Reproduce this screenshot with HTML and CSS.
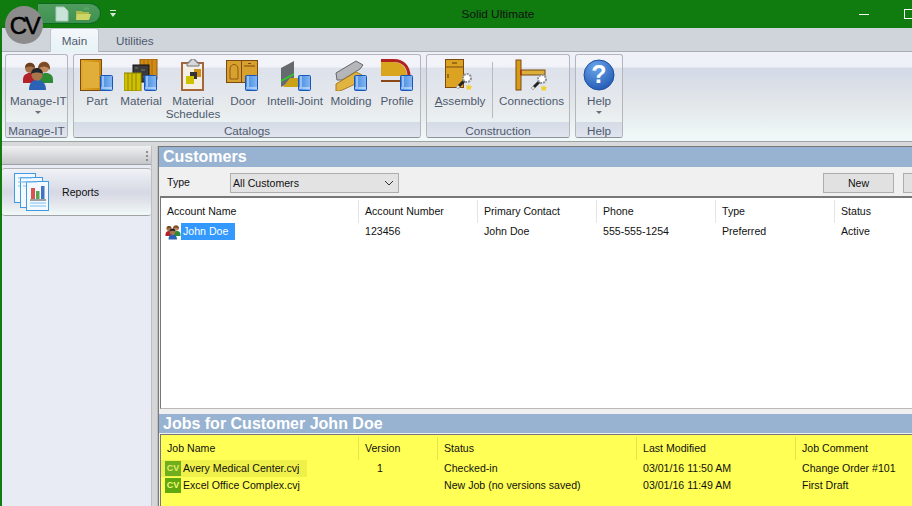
FILE: index.html
```html
<!DOCTYPE html>
<html lang="en">
<head>
<meta charset="utf-8">
<title>Solid Ultimate</title>
<link rel="stylesheet" href="styles.css">
</head>
<body>
<svg class="defs" width="0" height="0" aria-hidden="true">
  <defs>
    <linearGradient id="gold" x1="0" y1="0" x2="1" y2="0"><stop offset="0" stop-color="#e3aa2a"/><stop offset="1" stop-color="#c98a10"/></linearGradient>
    <linearGradient id="bk" x1="0" y1="0" x2="1" y2="0"><stop offset="0" stop-color="#3f87e0"/><stop offset="1" stop-color="#86b8f2"/></linearGradient>
    <radialGradient id="hlp" cx=".4" cy=".25" r=".85"><stop offset="0" stop-color="#6aa5ec"/><stop offset="1" stop-color="#1c54ae"/></radialGradient>
    <symbol id="book" viewBox="0 0 13 16">
      <rect x=".5" y=".5" width="12" height="15" rx="1" fill="url(#bk)" stroke="#1a56b8"/>
      <path d="M3 1v11M1 13h11" stroke="#e6f0ff" fill="none"/>
    </symbol>
    <symbol id="wand" viewBox="0 0 18 18">
      <path d="M2 16L10 8" stroke="#222" stroke-width="3"/>
      <path d="M2 16l2-2" stroke="#ddd" stroke-width="3"/>
      <circle cx="12" cy="6" r="4" fill="#fff" stroke="#8a8f98" stroke-width="2" stroke-dasharray="2 1"/>
      <path d="M11 13l2 1 1-2 1 2 2 0-1 2 0 2-2-1-2 1z" fill="#f0cf30"/>
    </symbol>
    <symbol id="people" viewBox="0 0 32 32">
      <path d="M1 21c0-5 3-7 7-7s7 2 7 7v3H1z" fill="#b3222a"/>
      <circle cx="8" cy="9" r="5" fill="#a56f45"/><path d="M3 9c0-7 10-7 10 0-3-2-7-2-10 0z" fill="#6b3f20"/>
      <path d="M17 21c0-5 3-7 7-7s7 2 7 7v3H17z" fill="#2d8a35"/>
      <circle cx="22" cy="8" r="5.500" fill="#c08a5e"/><path d="M16 11c-1-10 13-11 12 0-2-4-9-5-12 0z" fill="#7a4b25"/>
      <path d="M7 31c0-7 3-10 8-10s9 3 9 10z" fill="#2a63b5"/>
      <circle cx="15" cy="16" r="5.500" fill="#a8754c"/><path d="M9 15c0-8 12-8 12 0-3-2-9-2-12 0z" fill="#22262c"/>
    </symbol>
  </defs>
</svg>

<div class="app">
  <span class="logo">CV</span>
  <header class="titlebar">
    <div class="qat">
      <svg class="qat-ico" width="14" height="16" viewBox="0 0 14 16"><path d="M1 1h8l4 4v10H1z" fill="#c8e3d8" stroke="#a9ccbc"/></svg>
      <svg class="qat-ico" width="17" height="15" viewBox="0 0 17 15"><path d="M1 5h6l1 1h6v8H1z" fill="#a9b94a"/><path d="M2 8h14l-2 6H1z" fill="#cdd566"/><path d="M9 4c1-2 3-2 5-1" stroke="#58a86a" stroke-width="2" fill="none"/></svg>
    </div>
    <span class="qat-more"></span>
    <h1 class="title">Solid Ultimate</h1>
    <div class="winbtns">
      <span class="win-min"></span>
      <span class="win-max"></span>
    </div>
  </header>

  <nav class="tabs">
    <span class="tab tab-active">Main</span>
    <span class="tab">Utilities</span>
  </nav>

  <section class="ribbon">
    <div class="group g-manage">
      <div class="btns">
        <div class="rb w-full shift"><svg class="ico" width="32" height="32" viewBox="0 0 32 32"><use href="#people"/></svg><span>Manage-IT</span><i class="caret"></i></div>
      </div>
      <div class="glabel">Manage-IT</div>
    </div>

    <div class="group g-catalogs">
      <div class="btns">
        <div class="rb w44">
          <svg class="ico" width="34" height="32" viewBox="0 0 34 32"><rect x=".5" y=".5" width="21" height="31" fill="url(#gold)" stroke="#7a4a12"/><rect x="3" y="3" width="16" height="26" fill="#e2ae3a"/><use href="#book" x="20" y="16" width="13" height="16"/></svg>
          <span>Part</span>
        </div>
        <div class="rb w44">
          <svg class="ico" width="34" height="32" viewBox="0 0 34 32"><rect x="16" y="0" width="17" height="20" fill="#d18b14" stroke="#8d5a10"/><path d="M20 0v20M24 0v20M28 0v20" stroke="#a86a0e"/><rect x="9" y="6" width="16" height="17" fill="#3a3a3a" stroke="#111"/><path d="M11 9h3M17 11h4M12 15h5M19 18h3" stroke="#777"/><rect x="0" y="14" width="17" height="18" fill="#cfc000" stroke="#8c8400"/><path d="M4 14v18M8 14v18M12 14v18" stroke="#8f8500"/><use href="#book" x="20" y="16" width="13" height="16"/></svg>
          <span>Material</span>
        </div>
        <div class="rb w60">
          <svg class="ico" width="24" height="32" viewBox="0 0 24 32"><rect x="1" y="4" width="21" height="27" fill="#f3efe4" stroke="#a5673a" stroke-width="2"/><path d="M8 4V2h2V0h4v2h2v2h2v3H6V4z" fill="#d6d8dc" stroke="#777"/><rect x="13" y="10" width="7" height="8" fill="#d0901a"/><rect x="9" y="13" width="7" height="7" fill="#333"/><rect x="5" y="17" width="8" height="8" fill="#cfc000"/></svg>
          <span>Material<br>Schedules</span>
        </div>
        <div class="rb w40">
          <svg class="ico" width="34" height="32" viewBox="0 0 34 32"><rect x=".5" y="1.500" width="15" height="22" fill="#d8a02c" stroke="#7a4a12"/><path d="M4 20V10c0-6 8-6 8 0v10z" fill="none" stroke="#8a5a14"/><rect x="15.500" y="1.500" width="16" height="22" fill="#d8a02c" stroke="#7a4a12"/><path d="M18 7h11" stroke="#7a4a12"/><path d="M22 4.500h3" stroke="#7a4a12"/><use href="#book" x="19" y="16" width="13" height="16"/></svg>
          <span>Door</span>
        </div>
        <div class="rb w64">
          <svg class="ico" width="34" height="32" viewBox="0 0 34 32"><path d="M3 9l13-7v19L3 28z" fill="#666a6e"/><path d="M12 19h20v9H5z" fill="#c9a21a"/><path d="M3 22l13-7" stroke="#2ccc2c" stroke-width="1.500"/><use href="#book" x="20" y="16" width="13" height="16"/></svg>
          <span>Intelli-Joint</span>
        </div>
        <div class="rb w48">
          <svg class="ico" width="34" height="32" viewBox="0 0 34 32"><path d="M2 14l20-12 7 4-3 4-18 11H3z" fill="#b4b6ba" stroke="#666"/><path d="M2 25l20-12 6 3v6L6 32H2z" fill="#e1b442" stroke="#a67c20"/><use href="#book" x="20" y="16" width="13" height="16"/></svg>
          <span>Molding</span>
        </div>
        <div class="rb w44">
          <svg class="ico" width="34" height="32" viewBox="0 0 34 32"><path d="M1 3h12c9 0 14 6 14 14H1v4H1z" fill="#d9a41e"/><path d="M1 1.500h13c9 0 15 6 15 16" fill="none" stroke="#b02222" stroke-width="3"/><path d="M1 22h19" stroke="#8a4a18" stroke-width="2"/><use href="#book" x="20" y="16" width="13" height="16"/></svg>
          <span>Profile</span>
        </div>
      </div>
      <div class="glabel">Catalogs</div>
    </div>

    <div class="group g-construct">
      <div class="btns">
        <div class="rb w64">
          <svg class="ico" width="30" height="32" viewBox="0 0 30 32"><rect x=".5" y=".5" width="18" height="28" fill="#dba321" stroke="#7a4a12"/><path d="M1 8h17" stroke="#7a4a12"/><path d="M7 4h5M3 15v4" stroke="#5a3a10"/><use href="#wand" x="10" y="13" width="18" height="18"/></svg>
          <span><u>A</u>ssembly</span>
        </div>
        <div class="rb-sep"></div>
        <div class="rb w77">
          <svg class="ico" width="34" height="32" viewBox="0 0 34 32"><rect x="1" y="1" width="5" height="30" fill="#d89a18" stroke="#7a4a12"/><rect x="6" y="11" width="24" height="5" fill="#dcae3c" stroke="#7a4a12"/><path d="M6 11v5" stroke="#d01010"/><use href="#wand" x="15" y="14" width="18" height="18"/></svg>
          <span>Connections</span>
        </div>
      </div>
      <div class="glabel">Construction</div>
    </div>

    <div class="group g-help">
      <div class="btns">
        <div class="rb w-full">
          <svg class="ico" width="32" height="32" viewBox="0 0 32 32"><circle cx="16" cy="16" r="15" fill="url(#hlp)" stroke="#1d4f9f"/><text class="qmark" x="16" y="24" text-anchor="middle">?</text></svg>
          <span>Help</span><i class="caret"></i>
        </div>
      </div>
      <div class="glabel">Help</div>
    </div>
  </section>

  <div class="workspace">
    <aside class="sidebar">
      <div class="side-head"><i class="grip"></i></div>
      <div class="side-item">
        <svg width="36" height="38" viewBox="0 0 36 38"><g fill="#f4f9ff" stroke="#3f9ae0"><rect x=".5" y=".5" width="21" height="29"/><rect x="6.500" y="4.500" width="22" height="30"/><rect x="12.500" y="8.500" width="22" height="29"/></g><path d="M4 5h14M4 9h14M4 13h2M9 9h14M9 13h3" stroke="#7fc0ee"/><rect x="17" y="15" width="4" height="11" fill="#d9534f"/><rect x="22" y="18" width="3.500" height="8" fill="#53a653"/><rect x="27" y="13" width="3.500" height="13" fill="#4472c4"/><path d="M16 27h16" stroke="#444"/><path d="M16 30h16M16 33h16" stroke="#7fc0ee"/></svg>
        <span>Reports</span>
      </div>
    </aside>

    <div class="splitter"></div>

    <main class="panels">
      <h2 class="panel-title">Customers</h2>
      <div class="toolbar">
        <label class="type-label">Type</label>
        <div class="select"><span>All Customers</span><svg width="10" height="6" viewBox="0 0 10 6"><path d="M1 1l4 4 4-4" fill="none" stroke="#333"/></svg></div>
        <div class="actions">
          <button class="act" type="button">New</button>
          <button class="act" type="button"></button>
        </div>
      </div>

      <div class="list customers">
        <div class="cols c-cols head">
          <span>Account Name</span><span>Account Number</span><span>Primary Contact</span><span>Phone</span><span>Type</span><span>Status</span>
        </div>
        <div class="cols c-cols row">
          <span class="name"><svg width="16" height="16" viewBox="0 0 32 32"><use href="#people"/></svg><b class="sel">John Doe</b></span><span>123456</span><span>John Doe</span><span>555-555-1254</span><span>Preferred</span><span>Active</span>
        </div>
      </div>

      <h2 class="panel-title jobs-title">Jobs for Customer John Doe</h2>
      <div class="list jobs">
        <div class="cols j-cols head">
          <span>Job Name</span><span>Version</span><span>Status</span><span>Last Modified</span><span>Job Comment</span>
        </div>
        <div class="cols j-cols row job">
          <span class="name hl"><i class="cv dim">CV</i>Avery Medical Center.cvj</span><span class="ver">1</span><span>Checked-in</span><span>03/01/16 11:50 AM</span><span>Change Order #101</span>
        </div>
        <div class="cols j-cols row job">
          <span class="name"><i class="cv">CV</i>Excel Office Complex.cvj</span><span class="ver"></span><span>New Job (no versions saved)</span><span>03/01/16 11:49 AM</span><span>First Draft</span>
        </div>
      </div>
    </main>
  </div>
</div>
</body>
</html>
```

FILE: styles.css
```css
* { box-sizing: border-box; }
html, body { margin: 0; height: 100%; overflow: hidden; }
body { font-family: "Liberation Sans", Arial, sans-serif; font-size: 10.6px; color: #111; background: #d0d5dc; }
.defs { position: absolute; }
.app { position: relative; width: 912px; height: 506px; overflow: hidden; display: flex; flex-direction: column; border-left: 2px solid #107c10; }

.logo { position: absolute; left: 3px; top: 6px; width: 38px; height: 38px; border-radius: 50%; background: #8c8c8c; color: #000; font-size: 24px; line-height: 39px; text-align: center; letter-spacing: -2.5px; -webkit-text-stroke: .5px #000; z-index: 2; }

.titlebar { height: 28px; flex: none; background: #107c10; display: flex; align-items: center; padding-left: 36px; }
.qat { width: 63px; height: 21px; margin-top: -1px; background: linear-gradient(#4f9c5e, #3f9150); border: 1px solid #0c6a20; border-left: 0; border-radius: 0 12px 12px 0 / 0 11px 11px 0; display: flex; align-items: center; gap: 6px; padding-left: 17px; flex: none; }
.qat-ico { display: block; flex: none; }
.qat-more { display: block; width: 0; height: 0; margin-left: 9px; margin-right: 6px; border: 3px solid transparent; border-top: 4px solid #d8e8d8; border-bottom: 0; position: relative; top: 1px; }
.qat-more::before { content: ""; position: absolute; left: -3px; top: -7px; width: 6px; height: 1px; background: #d8e8d8; }
.title { margin: 0 0 0 338px; font-size: 11.8px; font-weight: 400; color: #111; white-space: nowrap; width: 76px; text-align: center; flex: none; }
.winbtns { display: flex; align-items: center; gap: 35px; margin-left: 323px; flex: none; }
.win-min { display: block; width: 10px; height: 1px; background: #fff; flex: none; }
.win-max { display: block; width: 10px; height: 10px; border: 1px solid #fff; flex: none; }

.tabs { height: 24px; flex: none; display: flex; align-items: flex-end; padding-left: 48px; background: #d0d5dc; border-bottom: 1px solid #a9acb2; }
.tab { height: 23px; padding: 0 17px; line-height: 25px; color: #4e5a6e; font-size: 11.7px; }
.tab-active { width: 49px; padding: 0; text-align: center; background: linear-gradient(#f5f7fb, #e6f3f5); border: 1px solid #bfc5cd; border-bottom: 0; border-radius: 3px 3px 0 0; margin-bottom: -1px; height: 24px; line-height: 23px; }

.ribbon { height: 90px; flex: none; display: flex; gap: 5px; padding: 2px 3px 3px; background: linear-gradient(#eff1f8 0, #edf0f7 15px, #d3d9e6 16px, #e4e8ea 55px, #f1faf9 100%); border-bottom: 1px solid #9ea1a6; }
.group { display: flex; flex-direction: column; border: 1px solid #b3b7bd; border-radius: 3px; border-bottom-color: #8e9196; background: linear-gradient(rgba(255,255,255,.25), rgba(255,255,255,.05)); flex: none; font-size: 11.7px; }
.g-manage { width: 63px; }
.g-catalogs { width: 348px; }
.g-construct { width: 144px; }
.g-help { width: 48px; }
.btns { flex: 1; display: flex; padding: 0 1px; min-height: 0; }
.glabel { height: 15px; line-height: 17px; text-align: center; color: #4e5a6e; background: linear-gradient(#d5dbe6, #e0e4ee); border-radius: 0 0 2px 2px; }
.rb { display: flex; flex-direction: column; align-items: center; padding-top: 4px; color: #4e5a6e; line-height: 13px; text-align: center; white-space: nowrap; flex: none; }
.rb > span { margin-top: 3px; }
.ico { display: block; flex: none; }
.w-full { flex: 1; }
.shift { padding-left: 3px; }
.w40 { width: 40px; } .w44 { width: 44px; } .w48 { width: 48px; } .w60 { width: 60px; } .w64 { width: 64px; } .w77 { width: 77px; }
.rb-sep { width: 1px; margin: 7px 0 4px; background: #b6bac0; flex: none; }
.caret { display: block; margin-top: 4px; width: 0; height: 0; border: 3.500px solid transparent; border-top: 3.500px solid #6a6f78; border-bottom: 0; }
.qmark { font: bold 25px "Liberation Sans", Arial, sans-serif; fill: #fff; }

.workspace { flex: 1; min-height: 0; display: flex; padding-top: 4px; background: #d8d9db; }
.sidebar { width: 149px; flex: none; background: #e8ebf4; }
.side-head { height: 19px; background: linear-gradient(#f0f0f2, #c4c6c9); position: relative; border-bottom: 1px solid #9d9fa3; }
.grip { position: absolute; right: 3px; top: 5px; width: 2px; height: 10px; background: repeating-linear-gradient(#8b8d90 0 2px, transparent 2px 4px); }
.side-item { height: 48px; margin-top: 3px; display: flex; align-items: center; gap: 12px; padding-left: 12px; background: linear-gradient(#f1f2f7 0, #d6d9e4 50%, #e0e3ea 70%, #f1f9f8 100%); border-top: 1px solid #b0b2b6; border-bottom: 1px solid #a0a2a6; border-radius: 3px; color: #111; }
.splitter { width: 7px; flex: none; background: #d5d6d8; border-left: 1px solid #bdbec0; border-right: 1px solid #bdbec0; }

.panels { width: 900px; flex: none; display: flex; flex-direction: column; border-left: 1px solid #777; border-top: 1px solid #777; background: #f0f0f0; }
.panel-title { margin: 0; height: 20px; flex: none; background: #98b3d1; color: #fff; font-size: 16px; font-weight: 700; line-height: 20px; padding-left: 4px; }
.toolbar { height: 29px; flex: none; display: flex; align-items: flex-start; padding: 6px 0 0 8px; }
.type-label { width: 63px; line-height: 19px; color: #111; flex: none; }
.select { width: 169px; height: 20px; display: flex; align-items: center; justify-content: space-between; padding: 0 4px 0 2px; border: 1px solid #adadad; background: #e3e3e3; flex: none; }
.actions { margin-left: 424px; display: flex; gap: 9px; flex: none; }
.act { width: 71px; height: 20px; padding: 0; border: 1px solid #adadad; background: #e1e1e1; font: 10.6px "Liberation Sans", Arial, sans-serif; color: #111; flex: none; }

.list { display: flex; flex-direction: column; margin-left: 1px; border-left: 1px solid #777; }
.customers { height: 213px; flex: none; background: #fff; border-top: 2px solid #777; margin-bottom: 5px; border-bottom: 1px solid #b8b8b8; padding-top: 2px; }
.cols { display: grid; align-items: center; }
.c-cols { grid-template-columns: 197px 119px 119px 119px 119px 1fr; }
.j-cols { grid-template-columns: 197px 79px 199px 159px 1fr; }
.head { height: 23px; flex: none; }
.head span { height: 100%; line-height: 23px; padding-left: 6px; border-left: 1px solid rgba(0,0,0,.1); white-space: nowrap; }
.head span:first-child { border-left: 0; }
.row { height: 17px; flex: none; align-items: start; }
.row span { padding-left: 7px; line-height: 16px; white-space: nowrap; }
.customers .row span:first-child { padding-left: 4px; display: flex; align-items: center; height: 17px; }
.sel { display: block; width: 54px; height: 17px; padding-left: 2px; line-height: 17px; background: #3399ff; color: #fff; font-weight: 400; }
.jobs-title { height: 19px; line-height: 19px; }
.jobs { flex: 1; background: #ffff55; border-top: 1px solid #777; margin-top: 1px; padding-top: 2px; }
.job .name { display: flex; align-items: flex-start; gap: 2px; padding-left: 4px; height: 17px; }
.hl { background: linear-gradient(#f0f04a, #f0f04a) no-repeat 0 0 / 146px 17px; }
.cv { display: block; width: 16px; height: 15px; margin-top: 1px; background: #5fa80f; color: #f2f57a; font: 700 9px/15px "Liberation Sans", Arial, sans-serif; text-align: center; flex: none; }
.cv.dim { background: #6fae1c; color: #e4ea6a; }
.ver { padding-left: 19px !important; }
```
